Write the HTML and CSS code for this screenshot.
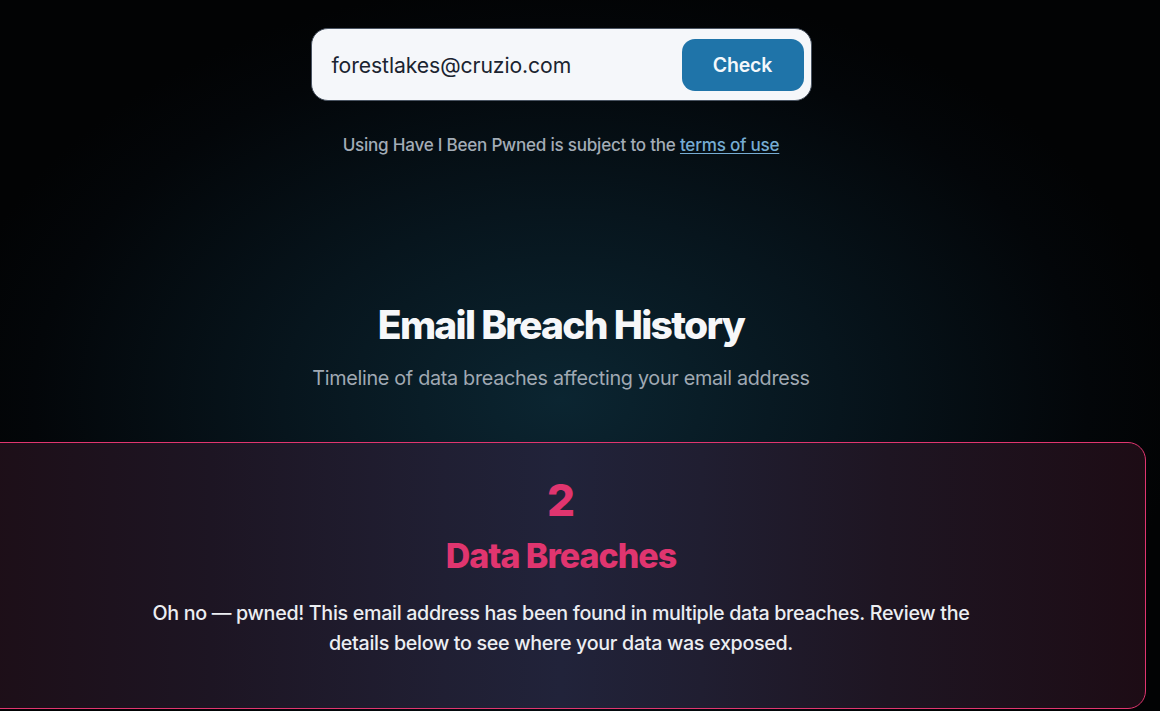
FILE: index.html
```html
<!DOCTYPE html>
<html lang="en">
<head>
<meta charset="utf-8">
<title>Have I Been Pwned</title>
<link rel="stylesheet" href="styles.css">
</head>
<body>
<div class="page">
  <form class="search">
    <span class="search-input">forestlakes@cruzio.com</span>
    <button type="button" class="search-btn">Check</button>
  </form>
  <p class="terms">Using Have I Been Pwned is subject to the <a href="#">terms of use</a></p>

  <header class="history-head">
    <h1 class="history-title">Email Breach History</h1>
    <p class="history-sub">Timeline of data breaches affecting your email address</p>
  </header>

  <section class="summary">
    <div class="summary-count">2</div>
    <h2 class="summary-label">Data Breaches</h2>
    <p class="summary-text">Oh no — pwned! This email address has been found in multiple data breaches. Review the details below to see where your data was exposed.</p>
  </section>
</div>
</body>
</html>
```
FILE: styles.css
```css
html, body {
  margin: 0;
  padding: 0;
  height: 100%;
  overflow: hidden;
}
body {
  font-family: Inter, "Noto Sans", sans-serif;
  background: radial-gradient(ellipse 620px 420px at 561px 400px, #0b2531 0%, #07151d 45%, #030609 85%, #020304 100%);
  color: #f1f3f6;
}
.page {
  width: 1170px;
  margin-left: -24px;
  display: flex;
  flex-direction: column;
  align-items: center;
  padding-top: 28px;
}
.search {
  width: 501px;
  height: 73px;
  box-sizing: border-box;
  background: #f5f7fa;
  border: 1px solid #4a5462;
  border-radius: 17px;
  display: flex;
  align-items: center;
  justify-content: space-between;
  padding: 0 7px 0 20px;
  margin: 0;
}
.search-input {
  font-size: 21.2px;
  color: #1b2430;
  letter-spacing: -0.1px;
}
.search-btn {
  width: 122px;
  height: 52px;
  border: none;
  border-radius: 13px;
  background: #1f74a9;
  color: #f4f8fb;
  font-family: Inter, "Noto Sans", sans-serif;
  font-size: 19.5px;
  font-weight: 600;
  letter-spacing: -0.2px;
  padding: 0;
}
.terms {
  margin: 33px 0 0;
  font-size: 17.1px;
  font-weight: 500;
  color: #a3acb7;
  letter-spacing: -0.25px;
}
.terms a {
  color: #76acd3;
  text-decoration: underline;
  text-underline-offset: 2px;
}
.history-head {
  margin-top: 147px;
  display: flex;
  flex-direction: column;
  align-items: center;
}
.history-title {
  margin: 0;
  font-size: 39px;
  font-weight: 800;
  letter-spacing: -1.7px;
  color: #f6f7f9;
  line-height: 46px;
}
.history-sub {
  margin: 18px 0 0;
  font-size: 19.8px;
  color: #a0a9b3;
  letter-spacing: -0.3px;
}
.summary {
  margin-top: 52px;
  width: 1170px;
  height: 267px;
  box-sizing: border-box;
  border: 1px solid #e0356f;
  border-radius: 18px;
  background: linear-gradient(90deg, #1d0e17 0%, #1d1523 20%, #201f33 40%, #21233a 50%, #201e31 62%, #1e1522 78%, #1d0c15 100%);
  display: flex;
  flex-direction: column;
  align-items: center;
  padding-top: 30px;
}
.summary-count {
  font-size: 44px;
  font-weight: 800;
  color: #e0356f;
  line-height: 54px;
}
.summary-label {
  margin: 9px 0 0;
  font-size: 34px;
  font-weight: 800;
  letter-spacing: -1px;
  color: #e0356f;
  line-height: 40px;
}
.summary-text {
  margin: 22px 0 0;
  width: 840px;
  text-align: center;
  font-size: 19.7px;
  font-weight: 500;
  line-height: 30px;
  color: #eceef2;
  letter-spacing: -0.32px;
}
```
